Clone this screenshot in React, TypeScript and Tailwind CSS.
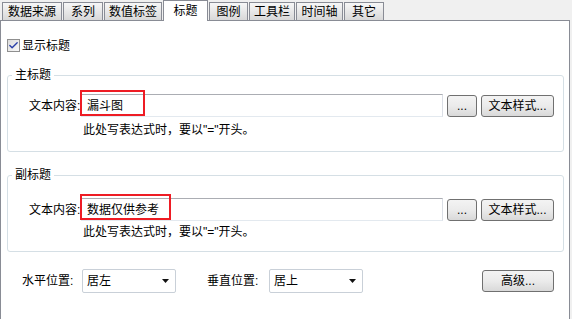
import { Check } from 'lucide-react';

const font = { fontFamily: '"Liberation Sans", "Noto Sans CJK SC", sans-serif' };

const tabs = [
  { label: '数据来源', w: 'w-[60px]' },
  { label: '系列', w: 'w-[40px]' },
  { label: '数值标签', w: 'w-[58px]' },
  { label: '标题', w: 'w-[45px]', active: true },
  { label: '图例', w: 'w-[39px]' },
  { label: '工具栏', w: 'w-[46px]' },
  { label: '时间轴', w: 'w-[47px]' },
  { label: '其它', w: 'w-[40px]' },
];

function Button({ children, className }: { children: React.ReactNode; className: string }) {
  return (
    <button
      className={`h-[22px] rounded-[3px] border border-[#707070] bg-gradient-to-b from-[#f3f3f3] via-[#ebebeb] to-[#d9d9d9] text-[12px] leading-[20px] text-black ${className}`}
    >
      {children}
    </button>
  );
}

function Select({ value }: { value: string }) {
  return (
    <div className="flex h-[24px] w-[94px] items-center justify-between rounded-[2px] border border-[#c9d0d8] bg-white pl-[4px] pr-[6px]">
      <span className="text-[12px]">{value}</span>
      <svg width="7" height="4" viewBox="0 0 7 4">
        <path d="M0 0h7L3.5 4z" fill="#111" />
      </svg>
    </div>
  );
}

// group box with one text row, a red highlight on the field, and a hint line
function TitleGroup({
  legend,
  text,
  redW,
  pt,
  hintMt,
  pb,
}: {
  legend: string;
  text: string;
  redW: string;
  pt: string;
  hintMt: string;
  pb: string;
}) {
  return (
    <fieldset className={`ml-[6px] mr-[5px] rounded-[3px] border border-[#d5dfe5] px-0 ${pb}`}>
      <legend className="ml-[4px] px-[3px] text-[12px] leading-[14px]">{legend}</legend>
      <div className={`flex items-center pl-[21px] ${pt}`}>
        <span className="w-[52px] text-[12px] leading-[14px]">文本内容:</span>
        <div className="relative">
          <div className="flex h-[23px] w-[362px] items-center border border-t-[#abadb3] border-r-[#dbdfe6] border-b-[#e3e9ef] border-l-[#e2e3ea] bg-white pl-[5px] text-[12px]">
            {text}
          </div>
          <div className={`absolute -left-[1px] -top-[4px] h-[26px] border-2 border-[#ee1c24] ${redW}`} />
        </div>
        <Button className="ml-[4px] w-[30px] text-[10px] text-[#2c2c8c]">...</Button>
        <Button className="ml-[4px] w-[73px]">文本样式...</Button>
      </div>
      <div className={`pl-[75px] text-[12px] leading-[14px] ${hintMt}`}>此处写表达式时，要以"="开头。</div>
    </fieldset>
  );
}

export default function App() {
  return (
    <div className="flex h-[319px] w-[572px] flex-col overflow-hidden bg-[#f0f0f0] text-black" style={font}>
      <div className="flex h-[20px] shrink-0 items-end gap-[1px] pl-[2px]">
        {tabs.map((t) =>
          t.active ? (
            <div
              key={t.label}
              className={`relative z-10 -mb-[1px] flex h-[21px] items-center justify-center border border-b-0 border-[#898c95] bg-white text-[12px] ${t.w}`}
            >
              {t.label}
            </div>
          ) : (
            <div
              key={t.label}
              className={`flex h-[18px] items-center justify-center border border-b-0 border-[#898c95] bg-gradient-to-b from-[#f7f7f7] to-[#d8d8d8] text-[12px] ${t.w}`}
            >
              {t.label}
            </div>
          )
        )}
      </div>

      <div className="mr-[2px] flex-1 border border-b-0 border-[#898c95] bg-white">
        <div className="ml-[6px] mt-[18px] flex h-[13px] items-center gap-[2px]">
          <div className="flex h-[13px] w-[13px] items-center justify-center border border-[#8f8f8f] bg-gradient-to-br from-[#dcdcdc] to-[#f8f8f8]">
            <Check size={11} strokeWidth={3} className="text-[#2a3fa8]" />
          </div>
          <span className="text-[12px] leading-[14px]">显示标题</span>
        </div>

        <div className="mt-[16px]">
          <TitleGroup legend="主标题" text="漏斗图" redW="w-[65px]" pt="pt-[12px]" hintMt="mt-[6px]" pb="pb-[14px]" />
        </div>

        <div className="mt-[16px]">
          <TitleGroup legend="副标题" text="数据仅供参考" redW="w-[91px]" pt="pt-[16px]" hintMt="mt-[4px]" pb="pb-[12px]" />
        </div>

        <div className="mt-[17px] flex items-center pl-[21px]">
          <span className="w-[60px] text-[12px]">水平位置:</span>
          <Select value="居左" />
          <span className="ml-[31px] w-[62px] text-[12px]">垂直位置:</span>
          <Select value="居上" />
          <Button className="ml-[119px] w-[72px]">高级...</Button>
        </div>
      </div>
    </div>
  );
}
